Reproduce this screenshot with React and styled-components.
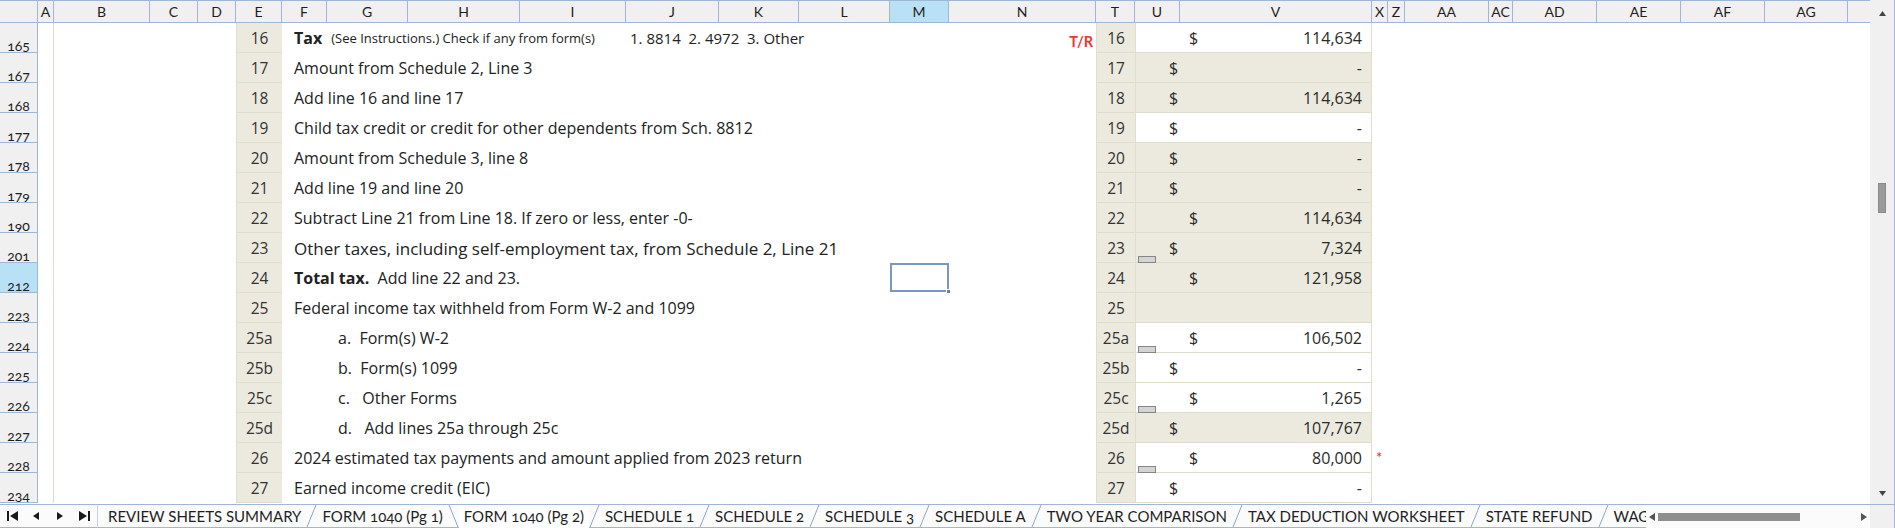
import React from 'react';
import styled, { createGlobalStyle } from 'styled-components';

const COLS = [38, 16, 96, 48, 38, 46, 45, 81, 112, 106, 93, 80, 91, 59, 147, 39, 45, 192, 16, 17, 84, 24, 84, 84, 84, 83, 22];
const TEMPLATE = COLS.map((w) => `${w}px`).join(' ');
const LETTERS = ['', 'A', 'B', 'C', 'D', 'E', 'F', 'G', 'H', 'I', 'J', 'K', 'L', 'M', 'N', 'T', 'U', 'V', 'X', 'Z', 'AA', 'AC', 'AD', 'AE', 'AF', 'AG', ''];

const GRID_LINE = '#9fb6d4';
const HEAD_BG = '#f0f0f0';
const ACTIVE_BG = '#b8e1f6';
const BEIGE = '#eceadf';
const BEIGE_LINE = '#e0ddcb';
const TEXT = '#222';
const BODY_FONT = '"Open Sans", "Noto Sans", sans-serif';

const Global = createGlobalStyle`
  *, *::before, *::after { box-sizing: border-box; }
  html, body { margin: 0; padding: 0; background: #fff; overflow: hidden; }
  body { font-family: Lato, "Noto Sans", sans-serif; color: ${TEXT}; }
`;

const Window = styled.div`
  width: 1895px;
  height: 528px;
  display: flex;
  flex-direction: column;
  background: #fff;
  overflow: hidden;
`;

const Main = styled.div`
  display: flex;
  height: 504px;
  flex: none;
`;

const Sheet = styled.div`
  width: 1870px;
  display: flex;
  flex-direction: column;
  overflow: hidden;
`;

const GridRow = styled.div`
  display: grid;
  grid-template-columns: ${TEMPLATE};
  height: ${(p) => p.$h}px;
  flex: none;
`;

const ColHead = styled.div`
  background: ${(p) => (p.$active ? ACTIVE_BG : HEAD_BG)};
  border-top: 1px solid ${GRID_LINE};
  border-bottom: 1px solid ${GRID_LINE};
  border-right: ${(p) => (p.$last ? 'none' : `1px solid ${GRID_LINE}`)};
  display: flex;
  align-items: center;
  justify-content: center;
  font-size: 14px;
  color: #1e1e1e;
  overflow: hidden;
  white-space: nowrap;
`;

const RowHead = styled.div`
  background: ${(p) => (p.$active ? ACTIVE_BG : HEAD_BG)};
  border-right: 1px solid ${GRID_LINE};
  border-bottom: 1px solid ${GRID_LINE};
  display: flex;
  align-items: flex-end;
  justify-content: center;
  font-size: 14px;
  line-height: 12px;
  padding-bottom: 0;
  font-variant-numeric: oldstyle-nums;
  color: #1e1e1e;
  overflow: hidden;
`;

const Blank = styled.div`
  grid-column: span ${(p) => p.$span || 1};
  background: #fff;
  border-right: ${(p) => (p.$edge ? `1px solid ${BEIGE_LINE}` : 'none')};
`;

const LineNo = styled.div`
  background: ${BEIGE};
  border-left: 1px solid ${BEIGE_LINE};
  border-bottom: 1px solid ${BEIGE_LINE};
  display: flex;
  align-items: center;
  justify-content: center;
  font-family: ${BODY_FONT};
  font-size: 15.5px;
  color: #333;
`;

const Desc = styled.div`
  grid-column: span ${(p) => p.$span};
  display: flex;
  align-items: center;
  padding-left: ${(p) => p.$indent}px;
  font-family: ${BODY_FONT};
  font-size: ${(p) => p.$size}px;
  white-space: pre;
  color: ${TEXT};
  overflow: visible;
  min-width: 0;
`;

const Strong = styled.span`
  font-weight: 700;
`;

const Small = styled.span`
  font-size: 13px;
  margin-left: 9px;
`;

const Extra = styled.div`
  grid-column: span 3;
  display: flex;
  align-items: center;
  padding-left: 4px;
  font-family: ${BODY_FONT};
  font-size: 15px;
  white-space: pre;
`;

const MCell = styled.div`
  position: relative;
  &::before {
    content: '';
    display: ${(p) => (p.$selected ? 'block' : 'none')};
    position: absolute;
    left: 0;
    top: 0;
    right: 0;
    bottom: 1px;
    border: 2px solid #7b97c0;
  }
  &::after {
    content: '';
    display: ${(p) => (p.$selected ? 'block' : 'none')};
    position: absolute;
    right: -2px;
    bottom: -1px;
    width: 5px;
    height: 5px;
    background: #5f80b0;
    border: 1px solid #fff;
  }
`;

const FlagCell = styled.div`
  display: flex;
  align-items: center;
  justify-content: flex-end;
  padding: 7px 3px 0 0;
  font-size: 14.5px;
  font-weight: 700;
  color: #f03434;
`;

const Amount = styled.div`
  grid-column: span 2;
  position: relative;
  background: ${(p) => (p.$shade ? BEIGE : '#fff')};
  border-left: 1px solid ${BEIGE_LINE};
  border-right: 1px solid ${BEIGE_LINE};
  border-bottom: 1px solid ${BEIGE_LINE};
  display: flex;
  align-items: center;
  justify-content: space-between;
  padding-left: ${(p) => p.$dollar}px;
  padding-right: 9px;
  font-family: ${BODY_FONT};
  font-size: 16px;
  color: #2a2a2a;
`;

const FormButton = styled.span`
  position: absolute;
  left: 2px;
  bottom: -1px;
  width: 18px;
  height: 7px;
  background: #d4d4d4;
  border: 1px solid #858585;
`;

const NoteCell = styled.div`
  display: flex;
  align-items: center;
  padding: 0 0 3px 4px;
  font-size: 15px;
  color: #f02020;
`;

const VScroll = styled.div`
  width: 25px;
  background: ${HEAD_BG};
  border-right: 1px solid ${GRID_LINE};
  display: flex;
  flex-direction: column;
  align-items: center;
`;

const ScrollBtn = styled.div`
  height: ${(p) => p.$h}px;
  width: 100%;
  display: flex;
  align-items: center;
  justify-content: center;
  flex: none;
`;

const VTrack = styled.div`
  flex: 1;
  width: 100%;
  display: flex;
  justify-content: center;
  padding-top: ${(p) => p.$offset}px;
`;

const VThumb = styled.div`
  width: 8px;
  height: 30px;
  background: #9a9a9a;
  border: 1px solid #8a8a8a;
`;

const TabBar = styled.div`
  height: 24px;
  display: flex;
  border-top: 1px solid ${GRID_LINE};
  background: #fbfbfb;
  flex: none;
`;

const Nav = styled.div`
  display: flex;
  width: 98px;
  flex: none;
  border-right: 1px solid #c9d3e0;
  border-bottom: 1px solid ${GRID_LINE};
`;

const NavBtn = styled.div`
  width: 24px;
  display: flex;
  align-items: center;
  justify-content: center;
`;

const Strip = styled.div`
  flex: 1;
  min-width: 0;
  display: flex;
  overflow: hidden;
`;

const Tab = styled.div`
  display: flex;
  align-items: center;
  padding: 0 5px 0 ${(p) => (p.$first ? 10 : 5)}px;
  font-size: 15px;
  white-space: nowrap;
  font-variant-numeric: oldstyle-nums;
  color: #1f1f1f;
  background: ${(p) => (p.$active ? '#fff' : 'transparent')};
  border-bottom: 1px solid ${(p) => (p.$active ? '#fff' : GRID_LINE)};
  flex: none;
`;

const SlantBox = styled.div`
  width: 11px;
  flex: none;
  display: flex;
  border-bottom: 1px solid ${GRID_LINE};
`;

const HScroll = styled.div`
  width: 224px;
  flex: none;
  display: flex;
  align-items: center;
  background: #fbfbfb;
`;

const HArrow = styled.div`
  width: 12px;
  display: flex;
  justify-content: center;
  flex: none;
`;

const HThumb = styled.div`
  width: 142px;
  height: 8px;
  background: #8e8e8e;
  flex: none;
`;

const Spacer = styled.div`
  flex: 1;
`;

const Corner = styled.div`
  width: 25px;
  flex: none;
  background: ${HEAD_BG};
  border-right: 1px solid ${GRID_LINE};
`;

const Tri = ({ dir = 'left', size = 7, color = '#333', bar = false }) => {
  const w = bar ? size + 3 : size;
  const h = size + 2;
  let d;
  if (dir === 'left') d = `M${w} 0 L${w} ${h} L${bar ? 3 : 0} ${h / 2} Z`;
  if (dir === 'right') d = `M0 0 L0 ${h} L${size} ${h / 2} Z`;
  if (dir === 'up') d = `M0 ${size} L${h} ${size} L${h / 2} 0 Z`;
  if (dir === 'down') d = `M0 0 L${h} 0 L${h / 2} ${size} Z`;
  const vw = dir === 'up' || dir === 'down' ? h : w;
  const vh = dir === 'up' || dir === 'down' ? size : h;
  return (
    <svg width={vw} height={vh} viewBox={`0 0 ${vw} ${vh}`}>
      <path d={d} fill={color} />
      {bar && dir === 'left' && <rect x="0" y="0" width="2" height={h} fill={color} />}
      {bar && dir === 'right' && <rect x={size + 1} y="0" width="2" height={h} fill={color} />}
    </svg>
  );
};

const Slant = ({ back }) => (
  <SlantBox>
    <svg width="11" height="22" viewBox="0 0 11 22">
      {back ? (
        <line x1="1" y1="0" x2="10" y2="22" stroke="#8ea6c6" strokeWidth="1" />
      ) : (
        <line x1="1" y1="22" x2="10" y2="0" stroke="#8ea6c6" strokeWidth="1" />
      )}
    </svg>
  </SlantBox>
);

const ROWS = [
  {
    hdr: '165', ln: '16',
    desc: (<><Strong>Tax</Strong><Small>(See Instructions.) Check if any from form(s)</Small></>),
    extra: '1. 8814  2. 4972  3. Other', flag: 'T/R', amt: '114,634', dollar: 'V', shade: false,
  },
  { hdr: '167', ln: '17', desc: 'Amount from Schedule 2, Line 3', amt: '-', dollar: 'U', shade: true },
  { hdr: '168', ln: '18', desc: 'Add line 16 and line 17', amt: '114,634', dollar: 'U', shade: true },
  { hdr: '177', ln: '19', desc: 'Child tax credit or credit for other dependents from Sch. 8812', amt: '-', dollar: 'U', shade: false },
  { hdr: '178', ln: '20', desc: 'Amount from Schedule 3, line 8', amt: '-', dollar: 'U', shade: true },
  { hdr: '179', ln: '21', desc: 'Add line 19 and line 20', amt: '-', dollar: 'U', shade: true },
  { hdr: '190', ln: '22', desc: 'Subtract Line 21 from Line 18. If zero or less, enter -0-', amt: '114,634', dollar: 'V', shade: true },
  { hdr: '201', ln: '23', desc: 'Other taxes, including self-employment tax, from Schedule 2, Line 21', size: 17, amt: '7,324', dollar: 'U', shade: true, btn: true },
  { hdr: '212', ln: '24', desc: (<><Strong>Total tax.</Strong>{'  Add line 22 and 23.'}</>), amt: '121,958', dollar: 'V', shade: true, selected: true },
  { hdr: '223', ln: '25', desc: 'Federal income tax withheld from Form W-2 and 1099', shade: true },
  { hdr: '224', ln: '25a', desc: 'a.  Form(s) W-2', indent: true, amt: '106,502', dollar: 'V', btn: true },
  { hdr: '225', ln: '25b', desc: 'b.  Form(s) 1099', indent: true, amt: '-', dollar: 'U' },
  { hdr: '226', ln: '25c', desc: 'c.   Other Forms', indent: true, amt: '1,265', dollar: 'V', btn: true },
  { hdr: '227', ln: '25d', desc: 'd.   Add lines 25a through 25c', indent: true, amt: '107,767', dollar: 'U', shade: true },
  { hdr: '228', ln: '26', desc: '2024 estimated tax payments and amount applied from 2023 return', amt: '80,000', dollar: 'V', btn: true, note: true },
  { hdr: '234', ln: '27', desc: 'Earned income credit (EIC)', amt: '-', dollar: 'U' },
];

const TABS = [
  'REVIEW SHEETS SUMMARY',
  'FORM 1040 (Pg 1)',
  'FORM 1040 (Pg 2)',
  'SCHEDULE 1',
  'SCHEDULE 2',
  'SCHEDULE 3',
  'SCHEDULE A',
  'TWO YEAR COMPARISON',
  'TAX DEDUCTION WORKSHEET',
  'STATE REFUND',
  'WAGES',
];
const ACTIVE_TAB = 2;

const DataRow = ({ r }) => (
  <GridRow $h={30}>
    <RowHead $active={r.selected}>{r.hdr}</RowHead>
    <Blank $edge />
    <Blank $span={3} />
    <LineNo>{r.ln}</LineNo>
    <Desc $span={r.extra ? 4 : 7} $indent={r.indent ? 56 : 12} $size={r.size || 16}>{r.desc}</Desc>
    {r.extra && <Extra>{r.extra}</Extra>}
    <MCell $selected={r.selected} />
    <FlagCell>{r.flag}</FlagCell>
    <LineNo>{r.ln}</LineNo>
    <Amount $shade={r.shade} $dollar={r.dollar === 'V' ? 53 : 33}>
      {r.amt && <span>$</span>}
      {r.amt && <span>{r.amt}</span>}
      {r.btn && <FormButton />}
    </Amount>
    <NoteCell>{r.note ? '*' : ''}</NoteCell>
    <Blank $span={8} />
  </GridRow>
);

export default function App() {
  return (
    <Window>
      <Global />
      <Main>
        <Sheet>
          <GridRow $h={23}>
            {LETTERS.map((l, i) => (
              <ColHead key={i} $active={l === 'M'} $last={i === LETTERS.length - 1}>{l}</ColHead>
            ))}
          </GridRow>
          {ROWS.map((r) => (
            <DataRow key={r.hdr} r={r} />
          ))}
        </Sheet>
        <VScroll>
          <ScrollBtn $h={26}><Tri dir="up" size={5} color="#444" /></ScrollBtn>
          <VTrack $offset={157}><VThumb /></VTrack>
          <ScrollBtn $h={22}><Tri dir="down" size={5} color="#444" /></ScrollBtn>
        </VScroll>
      </Main>
      <TabBar>
        <Nav>
          <NavBtn><Tri dir="left" size={8} color="#1a1a1a" bar /></NavBtn>
          <NavBtn><Tri dir="left" size={6} color="#1a1a1a" /></NavBtn>
          <NavBtn><Tri dir="right" size={6} color="#1a1a1a" /></NavBtn>
          <NavBtn><Tri dir="right" size={8} color="#1a1a1a" bar /></NavBtn>
        </Nav>
        <Strip>
          {TABS.map((t, i) => (
            <React.Fragment key={t}>
              {i > 0 && <Slant back={i === ACTIVE_TAB} />}
              <Tab $first={i === 0} $active={i === ACTIVE_TAB}>{t}</Tab>
            </React.Fragment>
          ))}
        </Strip>
        <HScroll>
          <HArrow><Tri dir="left" size={6} color="#555" /></HArrow>
          <HThumb />
          <Spacer />
          <HArrow><Tri dir="right" size={6} color="#555" /></HArrow>
        </HScroll>
        <Corner />
      </TabBar>
    </Window>
  );
}
